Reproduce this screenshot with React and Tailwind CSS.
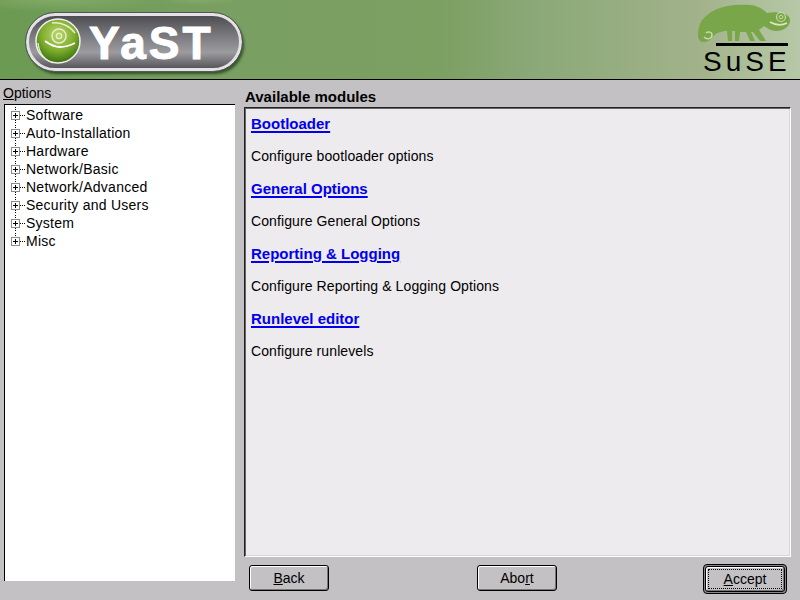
const font = { fontFamily: '"Liberation Sans", sans-serif' };

function Plus({ last }) {
  return (
    <svg width="18" height="18" viewBox="0 0 18 18" className="shrink-0" shapeRendering="crispEdges">
      <g stroke="#000">
        <path d={last ? "M7 0.5v4" : "M7 0.5v4M7 13.5v5"} strokeDasharray="1 1" fill="none" />
        <path d="M12 9.5h6" strokeDasharray="1 1" fill="none" />
      </g>
      <rect x="3.5" y="5.5" width="8" height="8" fill="#fff" stroke="#8c8c8c" />
      <path d="M5 9.5h5M7.5 7v5" stroke="#000" />
    </svg>
  );
}

function TreeRow({ label, last }) {
  return (
    <div className="flex h-[18px] items-center">
      <Plus last={last} />
      <span className="text-[14px] leading-[18px] tracking-[0.25px] text-black whitespace-nowrap">{label}</span>
    </div>
  );
}

function Module({ title, desc }) {
  return (
    <div className="h-[65px]">
      <a className="block h-[32px] text-[15px] leading-[20px] font-bold text-[#0000ee] whitespace-nowrap">
        <span className="underline decoration-2 underline-offset-2">{title}</span>
      </a>
      <div className="text-[14px] leading-[20px] tracking-[0.1px] text-black whitespace-nowrap">{desc}</div>
    </div>
  );
}

const btnFace = "flex h-[26px] w-[80px] items-center justify-center rounded-[3px] border border-black bg-[#c3c1c4] text-[14px] text-black shadow-[inset_1px_1px_0_#fff,inset_-1px_-1px_0_#777]";

function Btn({ children, focus, className }) {
  if (!focus) return <div className={className}><div className={btnFace}>{children}</div></div>;
  return (
    <div className={"flex h-[30px] w-[84px] items-center justify-center rounded-[4px] border border-black bg-[#8a888b] " + (className || "")}>
      <div className={btnFace}>
        <span className="flex h-[20px] w-[74px] items-center justify-center border border-dotted border-black">{children}</span>
      </div>
    </div>
  );
}

function YastLogo() {
  return (
    <div className="relative mt-[13px] ml-[26px] h-[58px] w-[216px] shrink-0 rounded-[29px] border-[3px] border-[#e4e2e6] bg-[linear-gradient(180deg,#4e4e52_0%,#77777b_35%,#9c9ca0_70%,#57575b_100%)] shadow-[2px_3px_3px_rgba(0,30,0,0.6)] outline outline-1 outline-[#55555a]">
      <svg className="absolute left-[6px] top-[2px]" width="46" height="46" viewBox="0 0 46 46">
        <defs>
          <radialGradient id="ball" cx="0.5" cy="0.35" r="0.68">
            <stop offset="0" stopColor="#bcd56e" />
            <stop offset="0.55" stopColor="#7fae2e" />
            <stop offset="1" stopColor="#2f6a0e" />
          </radialGradient>
        </defs>
        <circle cx="23" cy="23" r="22" fill="url(#ball)" stroke="#efefef" strokeWidth="1.5" />
        <circle cx="24" cy="18" r="7" fill="none" stroke="#e6eec8" strokeWidth="1.5" />
        <circle cx="24" cy="18" r="2.6" fill="none" stroke="#e6eec8" strokeWidth="1.4" />
        <path d="M10 23c4 3 8 6 15 6 6 0 11-2 15-4" fill="none" stroke="#fff" strokeWidth="1.8" />
        <path d="M17 5c9-1 18 3 23 10" fill="none" stroke="#e6eec8" strokeWidth="1.5" />
        <path d="M3 25c1 10 7 17 15 20" fill="none" stroke="#e6eec8" strokeWidth="1.3" />
      </svg>
      <span className="absolute left-[60px] top-[1px] text-[46px] leading-[52px] font-bold text-white tracking-[3px] [-webkit-text-stroke:1px_#fff]">YaST</span>
    </div>
  );
}

function SuseLogo() {
  return (
    <div className="relative h-[79px] w-[105px] shrink-0">
      <svg width="105" height="46" viewBox="0 0 105 46" className="block">
        <path fill="#7aa64a" d="M3 34C3 24 8 16 20 10C30 5 42 4 56 5C63 6 68 9 72 13C77 12 82 12 87 13C92 14 95 17 95 20C95 25 92 28 87 30C82 32 76 31 72 28L69 26L64 30L71 41L65 41L58 32L56 32L60 41L55 41L51 32L45 32L44 41L40 41L40 31L37 31L37 41L33 41L32 31C26 31 20 33 17 38C14 42 8 43 5 41C3 39 3 36 3 34Z" />
        <circle cx="86" cy="17" r="4.5" fill="none" stroke="#c9dba3" strokeWidth="1.2" />
        <circle cx="86" cy="17" r="1.8" fill="none" stroke="#c9dba3" strokeWidth="1" />
        <path d="M75 22c5 3 11 4 17 1" fill="none" stroke="#dbe6bd" strokeWidth="1.6" />
        <path d="M9 37c3 3 8 2 8-2 0-3-4-4-6-2" fill="none" stroke="#c9dba3" strokeWidth="1.5" />
        <rect x="21" y="43" width="72" height="3" fill="#000" />
      </svg>
      <div className="ml-[8px] mt-[1px] text-[28px] leading-[29px] tracking-[4px] text-black whitespace-nowrap">SuSE</div>
    </div>
  );
}

export default function App() {
  const tree = ["Software", "Auto-Installation", "Hardware", "Network/Basic", "Network/Advanced", "Security and Users", "System", "Misc"];
  const mods = [
    ["Bootloader", "Configure bootloader options"],
    ["General Options", "Configure General Options"],
    ["Reporting & Logging", "Configure Reporting & Logging Options"],
    ["Runlevel editor", "Configure runlevels"],
  ];
  return (
    <div className="flex h-[600px] w-[800px] flex-col overflow-hidden bg-[#c3c1c4]" style={font}>
      <header className="flex h-[80px] shrink-0 items-start justify-between border-b border-b-black bg-[radial-gradient(ellipse_at_60px_0px,#82aa68_0%,rgba(130,170,104,0)_110px),radial-gradient(ellipse_at_200px_0px,#82aa68_0%,rgba(130,170,104,0)_40px),linear-gradient(90deg,#6b9a52_0%,#7a9f63_30%,#7c9f62_55%,#8aa877_66%,#a1b28a_87%,#b7c8a8_100%)]">
        <YastLogo />
        <SuseLogo />
      </header>
      <div className="flex min-h-0 flex-1">
        <aside className="ml-[4px] flex w-[231px] shrink-0 flex-col">
          <div className="-ml-px h-[24px] pt-[4px] text-[14px] leading-[18px] text-black"><span className="underline">O</span>ptions</div>
          <div className="h-[477px] border-l border-t border-l-black border-t-black bg-white pl-[3px] pt-[1px]">
            {tree.map((t, i) => <TreeRow key={t} label={t} last={i === tree.length - 1} />)}
          </div>
        </aside>
        <main className="ml-[9px] flex w-[547px] shrink-0 flex-col">
          <div className="h-[27px] pl-[1px] pt-[8px] text-[15px] leading-[18px] font-bold text-black whitespace-nowrap">Available modules</div>
          <div className="h-[450px] border border-t-[#222] border-l-[#222] border-r-white border-b-white bg-[#eeebee] shadow-[inset_1px_1px_0_#666,inset_-1px_-1px_0_#d8d6d8] pl-[6px] pt-[6px]">
            {mods.map(([a, b]) => <Module key={a} title={a} desc={b} />)}
          </div>
          <div className="mt-[7px] flex items-start justify-between pl-[5px] pr-[4px]">
            <Btn className="mt-[1px]"><span><span className="underline">B</span>ack</span></Btn>
            <Btn className="mt-[1px] ml-[2px]"><span>Abo<span className="underline">r</span>t</span></Btn>
            <Btn focus><span><span className="underline">A</span>ccept</span></Btn>
          </div>
        </main>
      </div>
    </div>
  );
}
